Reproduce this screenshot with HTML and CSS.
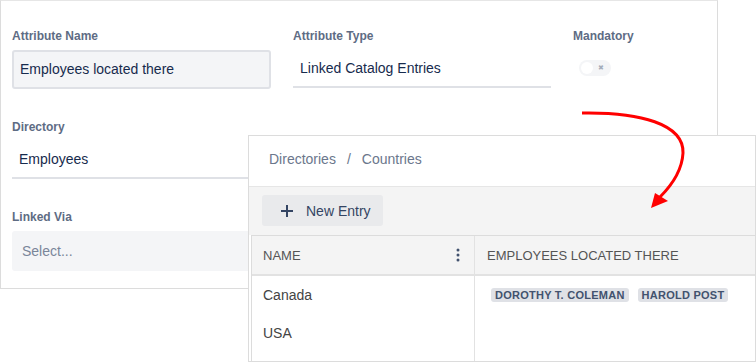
FILE: index.html
```html
<!DOCTYPE html>
<html lang="en">
<head>
    <meta charset="UTF-8">
    <title>Linked Catalog Entries</title>
    <link rel="stylesheet" href="styles.css">
</head>
<body>
    <div class="stage">
        <!-- attribute form (back) -->
        <div class="form-card">
            <div class="form-grid">
                <div class="field">
                    <label class="field-label">Attribute Name</label>
                    <div class="text-input">Employees located there</div>
                </div>
                <div class="field">
                    <label class="field-label">Attribute Type</label>
                    <div class="plain-input">Linked Catalog Entries</div>
                </div>
                <div class="field">
                    <label class="field-label">Mandatory</label>
                    <div class="toggle">
                        <span class="toggle-knob"></span>
                        <span class="toggle-x">&#x2716;</span>
                    </div>
                </div>
                <div class="field field-first">
                    <label class="field-label">Directory</label>
                    <div class="plain-input">Employees</div>
                </div>
                <div class="field field-first">
                    <label class="field-label">Linked Via</label>
                    <div class="select-input">Select...</div>
                </div>
            </div>
        </div>

        <!-- catalog preview (front) -->
        <div class="catalog-card">
            <div class="breadcrumb">
                <span>Directories</span>
                <span class="crumb-sep">/</span>
                <span>Countries</span>
            </div>
            <div class="toolbar">
                <button class="new-entry">
                    <svg width="14" height="14" viewBox="0 0 14 14"><path d="M7 1v12M1 7h12" stroke="#344563" stroke-width="2"/></svg>
                    <span>New Entry</span>
                </button>
            </div>
            <div class="table">
                <div class="th th-name">
                    <span>Name</span>
                    <svg class="kebab" width="4" height="14" viewBox="0 0 4 14"><circle cx="2" cy="2" r="1.5"/><circle cx="2" cy="7" r="1.5"/><circle cx="2" cy="12" r="1.5"/></svg>
                </div>
                <div class="th">Employees located there</div>
                <div class="td">Canada</div>
                <div class="td td-tags">
                    <span class="tag">Dorothy T. Coleman</span>
                    <span class="tag">Harold Post</span>
                </div>
                <div class="td">USA</div>
                <div class="td"></div>
                <div class="td"></div>
                <div class="td"></div>
            </div>
        </div>

        <svg class="arrow" width="756" height="362" viewBox="0 0 756 362">
            <path d="M582 113 C640 112 684 124 683 153 C682 172 671 186 660 197" fill="none" stroke="#f00" stroke-width="3"/>
            <polygon points="651,208 655,193 668,201" fill="#f00"/>
        </svg>
    </div>
</body>
</html>
```

FILE: styles.css
```css
body {
    margin: 0;
    background: #fff;
    font-family: 'Liberation Sans', Arial, sans-serif;
    color: #172b4d;
}

.stage {
    position: relative;
    width: 756px;
    height: 362px;
    overflow: hidden;
}

.form-card {
    width: 718px;
    height: 289px;
    box-sizing: border-box;
    border: 1px solid #dcdcdc;
    border-top-color: #e6e6e6;
    padding: 28px 11px 0 11px;
}

.form-grid {
    display: grid;
    grid-template-columns: 259px 258px 120px;
    column-gap: 22px;
    row-gap: 31px;
}

.field-first {
    grid-column: 1;
}

.field-label {
    display: block;
    font-size: 12px;
    font-weight: 700;
    line-height: 15px;
    color: #5e6c84;
    margin-bottom: 6px;
}

.text-input {
    height: 39px;
    box-sizing: border-box;
    background: #f4f5f7;
    border: 2px solid #dfe1e6;
    border-radius: 3px;
    padding: 0 6px;
    font-size: 14px;
    line-height: 35px;
}

.plain-input {
    height: 38px;
    box-sizing: border-box;
    border-bottom: 2px solid #dfe1e6;
    padding: 0 7px;
    font-size: 14px;
    line-height: 36px;
}

.select-input {
    height: 40px;
    box-sizing: border-box;
    background: #f4f5f7;
    border-radius: 3px;
    padding: 0 10px;
    font-size: 14px;
    line-height: 40px;
    color: #7a869a;
    width: 300px;
}

.toggle {
    margin: 16px 0 0 6px;
    width: 32px;
    height: 16px;
    border-radius: 8px;
    background: #f4f5f7;
    display: flex;
    align-items: center;
    padding: 0 2px;
    box-sizing: border-box;
    gap: 5px;
}

.toggle-knob {
    width: 12px;
    height: 12px;
    border-radius: 50%;
    background: #fff;
}

.toggle-x {
    font-size: 7px;
    color: #a5adba;
}

.catalog-card {
    position: absolute;
    left: 248px;
    top: 135px;
    width: 508px;
    height: 227px;
    box-sizing: border-box;
    border: 1px solid #dcdcdc;
    background: #fff;
    display: flex;
    flex-direction: column;
}

.breadcrumb {
    height: 51px;
    box-sizing: border-box;
    border-bottom: 1px solid #e6e6e6;
    padding: 0 20px 5px;
    display: flex;
    align-items: center;
    gap: 11px;
    font-size: 14px;
    color: #6b778c;
}

.toolbar {
    height: 48px;
    box-sizing: border-box;
    background: #f4f4f4;
    padding: 8px 13px;
}

.new-entry {
    height: 31px;
    display: inline-flex;
    align-items: center;
    gap: 12px;
    padding: 0 12px 0 18px;
    border: none;
    border-radius: 3px;
    background: #e9eaec;
    font-family: inherit;
    font-size: 14px;
    color: #344563;
}

.table {
    flex: 1;
    margin-left: 2px;
    display: grid;
    grid-template-columns: 223px 1fr;
    grid-template-rows: 40px 38px 38px 1fr;
    border-top: 1px solid #dcdcdc;
    border-left: 1px solid #dcdcdc;
}

.th {
    background: #f4f4f4;
    border-bottom: 2px solid #e2e2e2;
    font-size: 13px;
    text-transform: uppercase;
    color: #555;
    display: flex;
    align-items: center;
    padding: 0 12px;
}

.th-name {
    justify-content: space-between;
    padding: 0 14px 0 11px;
    border-right: 1px solid #e2e2e2;
}

.kebab {
    fill: #42526e;
}

.td {
    font-size: 14px;
    color: #444;
    display: flex;
    align-items: center;
    padding: 0 11px;
}

.table > .td:nth-child(odd) {
    border-right: 1px solid #e2e2e2;
}

.td-tags {
    gap: 9px;
    padding: 0 16px;
}

.tag {
    background: #dfe1e6;
    border-radius: 3px;
    padding: 0 4px;
    height: 14px;
    line-height: 14px;
    font-size: 11px;
    font-weight: 700;
    letter-spacing: 0.25px;
    text-transform: uppercase;
    color: #42526e;
}

.arrow {
    position: absolute;
    left: 0;
    top: 0;
    pointer-events: none;
}
```
